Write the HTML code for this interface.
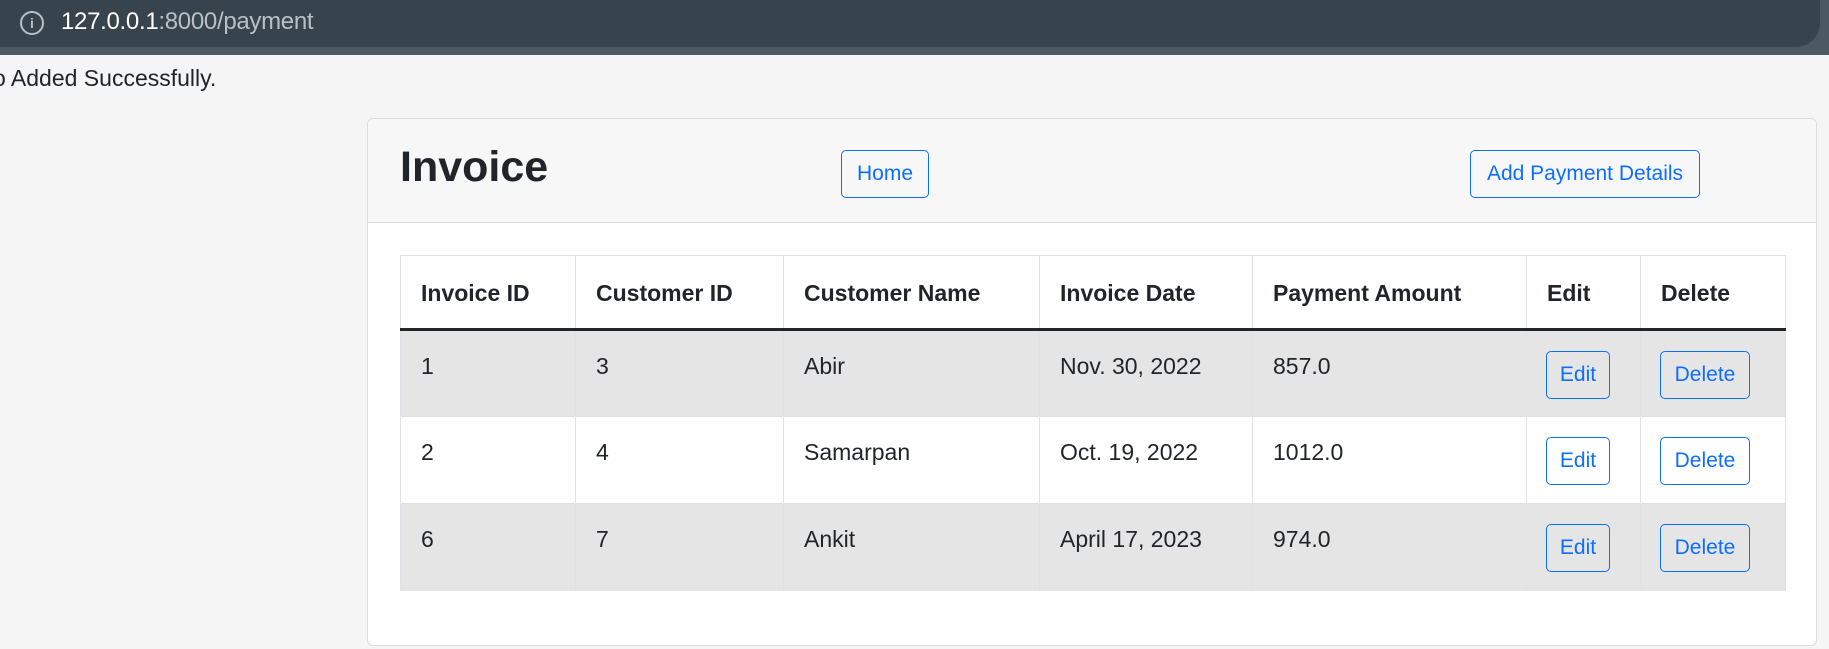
<!DOCTYPE html>
<html><head><meta charset="utf-8"><style>
*{box-sizing:border-box;margin:0;padding:0}
body{width:1829px;height:649px;overflow:hidden;background:#f5f5f5;font-family:"Liberation Sans",sans-serif;color:#212529;position:relative}
.bar{position:absolute;left:0;top:0;width:1829px;height:55px;background:#4a5963}
.pill{position:absolute;left:0;top:0;width:1820px;height:47px;background:#37444d;border-radius:0 0 24px 0}
.url{position:absolute;left:61px;top:8px;font-size:24px;color:#b8c0c6;letter-spacing:-0.3px}
.url b{font-weight:normal;color:#fff}
.ico{position:absolute;left:20px;top:11px;width:24px;height:24px;border:2px solid #b8c0c6;border-radius:50%;color:#b8c0c6;font-size:14px;font-weight:bold;text-align:center;line-height:20px}
.msg{position:absolute;left:-7px;top:65px;font-size:23px}
.card{position:absolute;left:367px;top:118px;width:1450px;height:528px;border:1px solid #dcdcdc;border-radius:6px;background:#fff;overflow:hidden}
.head{height:104px;background:#f7f7f7;border-bottom:1px solid #dcdcdc;position:relative}
h1{position:absolute;left:32px;top:24px;font-size:43px;font-weight:bold}
.btn{position:absolute;border:1px solid #0d6efd;color:#0d6efd;border-radius:5px;font-size:21px;text-align:center;background:transparent}
table{position:absolute;left:32px;top:136px;border-collapse:collapse;font-size:23px}
td,th{border:1px solid #dee2e6;text-align:left;vertical-align:top;padding:0 0 0 20px;position:relative}
th{height:74px;font-weight:bold;padding-top:24px;border-bottom:3px solid #212529}
td{height:87px;padding-top:22px}
tr.s td{background:#e5e5e5}
tr:last-child td{border-bottom:none}
td .b{position:absolute;top:20px;height:48px;line-height:46px;border:1px solid #0d6efd;color:#0d6efd;border-radius:5px;font-size:21px;text-align:center}
</style></head><body>
<div class="bar"><div class="pill"><div class="ico">i</div><div class="url"><b>127.0.0.1</b>:8000/payment</div></div></div>
<div class="msg">o Added Successfully.</div>
<div class="card">
<div class="head"><h1>Invoice</h1>
<div class="btn" style="left:473px;top:31px;width:88px;height:48px;line-height:46px">Home</div>
<div class="btn" style="left:1102px;top:31px;width:230px;height:48px;line-height:46px">Add Payment Details</div>
</div>
<table>
<tr><th style="width:175px">Invoice ID</th><th style="width:208px">Customer ID</th><th style="width:256px">Customer Name</th><th style="width:213px">Invoice Date</th><th style="width:274px">Payment Amount</th><th style="width:114px">Edit</th><th style="width:145px">Delete</th></tr>
<tr class="s"><td>1</td><td>3</td><td>Abir</td><td>Nov. 30, 2022</td><td>857.0</td><td><div class="b" style="left:19px;width:64px">Edit</div></td><td><div class="b" style="left:19px;width:90px">Delete</div></td></tr>
<tr><td>2</td><td>4</td><td>Samarpan</td><td>Oct. 19, 2022</td><td>1012.0</td><td><div class="b" style="left:19px;width:64px">Edit</div></td><td><div class="b" style="left:19px;width:90px">Delete</div></td></tr>
<tr class="s"><td>6</td><td>7</td><td>Ankit</td><td>April 17, 2023</td><td>974.0</td><td><div class="b" style="left:19px;width:64px">Edit</div></td><td><div class="b" style="left:19px;width:90px">Delete</div></td></tr>
</table>
</div>
</body></html>
